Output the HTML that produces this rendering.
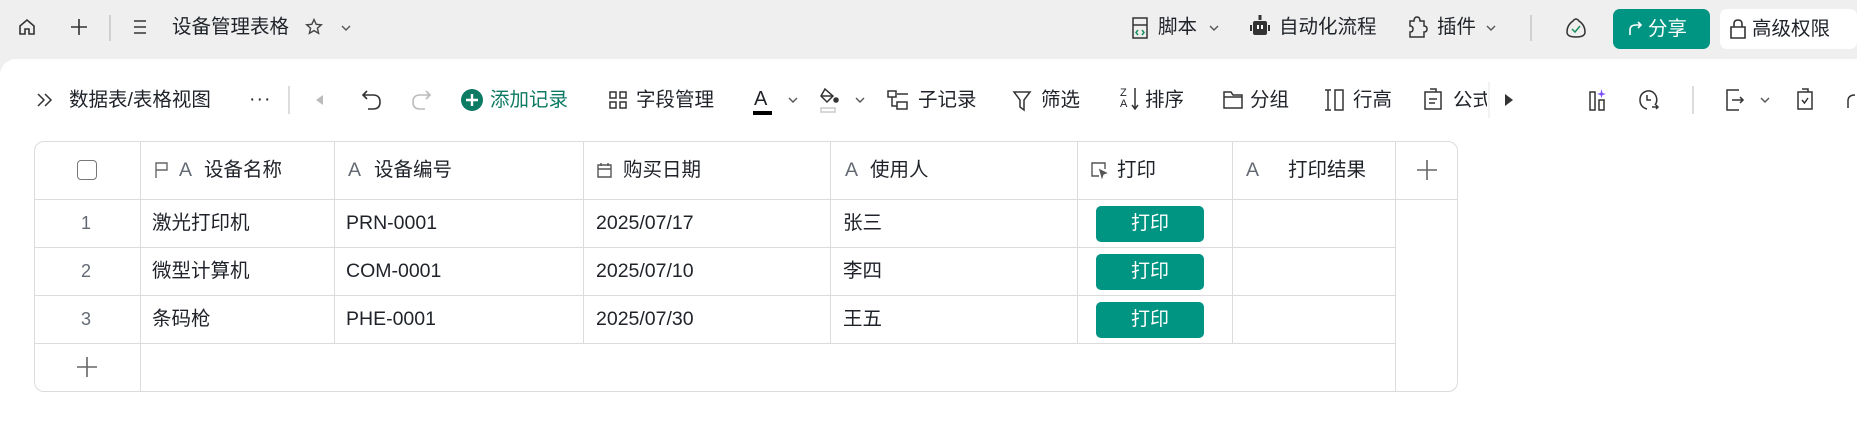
<!DOCTYPE html>
<html><head><meta charset="utf-8"><style>
*{margin:0;padding:0;box-sizing:border-box}
body{width:1857px;height:423px;background:#efefef;font-family:"Liberation Sans","Noto Sans CJK SC",sans-serif;color:#1f2329;position:relative;overflow:hidden;font-size:19.5px}
.a{position:absolute;white-space:nowrap;line-height:1}
.panel{position:absolute;left:0;top:59px;width:1857px;height:364px;background:#fff;border-top-left-radius:16px}
svg{position:absolute;overflow:visible}
.tbl{position:absolute;left:34px;top:141px;width:1424px;height:251px;border:1px solid #dcdcdc;border-radius:10px;background:#fff}
.hl{position:absolute;height:1px;background:#dcdcdc}
.vl{position:absolute;width:1px;background:#dcdcdc}
.btn{position:absolute;left:1096px;width:108px;height:36px;background:#009482;border-radius:5px;color:#fff;font-size:19px;text-align:center;line-height:36px}
.g{color:#646a73}
</style></head><body>
<svg style="left:17px;top:17px" width="20" height="20" viewBox="0 0 20 20" fill="none" stroke="#333" stroke-width="1.6"><path d="M3 9 L10 3 L17 9 V17 H12 V12 H8 V17 H3 Z"/></svg>
<svg style="left:70px;top:18px" width="18" height="18" fill="none" stroke="#333" stroke-width="1.6"><path d="M9 1V17M1 9H17"/></svg>
<div class="a" style="left:109px;top:15px;width:1.5px;height:26px;background:#d0d0d0"></div>
<svg style="left:133px;top:20px" width="14" height="14" fill="none" stroke="#333" stroke-width="1.5"><path d="M1 1H13M1 7H13M1 13H13"/></svg>
<div class="a" style="left:172px;top:18px">设备管理表格</div>
<svg style="left:305px;top:18px" width="18" height="18" fill="none" stroke="#444" stroke-width="1.4"><path d="M9 1.5L11.2 6.3 16.3 6.8 12.4 10.2 13.6 15.3 9 12.6 4.4 15.3 5.6 10.2 1.7 6.8 6.8 6.3Z"/></svg>
<svg style="left:341px;top:25px" width="10" height="6" fill="none" stroke="#555" stroke-width="1.4"><path d="M1 1L5 5 9 1"/></svg>

<svg style="left:1131px;top:17px" width="18" height="22" fill="none" stroke="#333" stroke-width="1.5"><path d="M2 1H16V21H2Z M2 8H16"/><path d="M7 13L5 15.5 7 18M11 13L13 15.5 11 18" stroke="#1a8f5f"/></svg>
<div class="a" style="left:1158px;top:18px">脚本</div>
<svg style="left:1209px;top:25px" width="10" height="6" fill="none" stroke="#555" stroke-width="1.4"><path d="M1 1L5 5 9 1"/></svg>
<svg style="left:1250px;top:15px" width="20" height="24" fill="#333"><rect x="8.5" y="0" width="3" height="5"/><rect x="3" y="6" width="14" height="14" rx="2"/><rect x="0" y="10" width="2" height="6"/><rect x="18" y="10" width="2" height="6"/><rect x="7" y="10" width="2" height="4" fill="#fff"/><rect x="11" y="10" width="2" height="4" fill="#fff"/></svg>
<div class="a" style="left:1279px;top:18px">自动化流程</div>
<svg style="left:1406px;top:16px" width="22" height="22" fill="none" stroke="#333" stroke-width="1.5"><path d="M4 5H8Q8 1 11 1Q14 1 14 5H18V10Q21 10 21 13Q21 16 18 16V21H4V16Q7 16 7 13Q7 10 4 10Z"/></svg>
<div class="a" style="left:1437px;top:18px">插件</div>
<svg style="left:1486px;top:25px" width="10" height="6" fill="none" stroke="#555" stroke-width="1.4"><path d="M1 1L5 5 9 1"/></svg>
<div class="a" style="left:1530px;top:15px;width:1.5px;height:26px;background:#d0d0d0"></div>
<svg style="left:1565px;top:17px" width="22" height="22" fill="none" stroke="#333" stroke-width="1.5"><path d="M8 4Q11 0 14 4Q20 8 20 15Q20 20 11 20Q2 20 2 15Q2 8 8 4Z"/><path d="M7 12L10 15 15 9" stroke="#1a8f5f"/></svg>
<div class="a" style="left:1613px;top:9px;width:97px;height:40px;background:#009482;border-radius:7px;color:#fff;line-height:40px"><svg style="left:14px;top:12px;position:absolute" width="16" height="16" fill="none" stroke="#fff" stroke-width="1.6"><path d="M3 14V9Q3 4 9 4H14M11 1L14 4 11 7"/></svg><span style="position:absolute;left:35px">分享</span></div>
<div class="a" style="left:1720px;top:9px;width:137px;height:40px;background:#fff;border-radius:7px;line-height:40px"><svg style="left:10px;top:10px;position:absolute" width="16" height="20" fill="none" stroke="#333" stroke-width="1.6"><path d="M4 8V5Q4 1 8 1Q12 1 12 5V8M1 8H15V19H1Z"/></svg><span style="position:absolute;left:32px">高级权限</span></div>

<div class="panel"></div>
<svg style="left:37px;top:93px" width="16" height="14" fill="none" stroke="#333" stroke-width="1.5"><path d="M1 1L7 7 1 13M8 1L14 7 8 13"/></svg>
<div class="a" style="left:69px;top:91px">数据表/表格视图</div>
<div class="a" style="left:249px;top:90px;letter-spacing:1px">···</div>
<div class="a" style="left:288px;top:86px;width:1.5px;height:28px;background:#dcdcdc"></div>
<svg style="left:316px;top:95px" width="7" height="10" fill="#bbb"><path d="M7 0V10L0 5Z"/></svg>
<svg style="left:362px;top:89px" width="20" height="22" fill="none" stroke="#333" stroke-width="1.6"><path d="M5 2L1 6 5 10M1 6H11Q18 6 18 13Q18 20 11 20H6"/></svg>
<svg style="left:411px;top:89px" width="20" height="22" fill="none" stroke="#bbb" stroke-width="1.6"><path d="M15 2L19 6 15 10M19 6H9Q2 6 2 13Q2 20 9 20H14"/></svg>
<svg style="left:461px;top:89px" width="22" height="22"><circle cx="11" cy="11" r="11" fill="#0d7a64"/><path d="M11 5V17M5 11H17" stroke="#fff" stroke-width="2.4"/></svg>
<div class="a" style="left:490px;top:91px;color:#0d7a64">添加记录</div>
<svg style="left:609px;top:91px" width="18" height="18" fill="none" stroke="#333" stroke-width="1.5"><rect x="1" y="1" width="6" height="6"/><rect x="11" y="1" width="6" height="6"/><rect x="1" y="11" width="6" height="6"/><rect x="11" y="11" width="6" height="6"/></svg>
<div class="a" style="left:636px;top:91px">字段管理</div>
<div class="a" style="left:754px;top:89px;font-size:20px">A</div>
<div class="a" style="left:753px;top:111px;width:19px;height:4px;background:#000"></div>
<svg style="left:788px;top:97px" width="10" height="6" fill="none" stroke="#555" stroke-width="1.4"><path d="M1 1L5 5 9 1"/></svg>
<svg style="left:818px;top:88px" width="22" height="26" fill="none" stroke="#333" stroke-width="1.5"><path d="M7 1L3 8 9 14 15 8Z"/><path d="M3 8H15" /><circle cx="18" cy="12" r="2" fill="#333"/><rect x="3" y="20" width="14" height="4" stroke="#ccc"/></svg>
<svg style="left:855px;top:97px" width="10" height="6" fill="none" stroke="#555" stroke-width="1.4"><path d="M1 1L5 5 9 1"/></svg>
<svg style="left:887px;top:90px" width="22" height="20" fill="none" stroke="#333" stroke-width="1.5"><path d="M1 1H9V7H1ZM5 7V16H10M10 4H21M10 12H20V19H10Z"/></svg>
<div class="a" style="left:918px;top:91px">子记录</div>
<svg style="left:1013px;top:91px" width="18" height="20" fill="none" stroke="#333" stroke-width="1.5"><path d="M1 1H17L11 9V19L7 16V9Z"/></svg>
<div class="a" style="left:1041px;top:91px">筛选</div>
<div class="a" style="left:1120px;top:88px;font-size:11px;line-height:11px">Z<br>A</div>
<svg style="left:1131px;top:88px" width="8" height="22" fill="none" stroke="#333" stroke-width="1.5"><path d="M4 0V20M1 17L4 21 7 17"/></svg>
<div class="a" style="left:1145px;top:91px">排序</div>
<svg style="left:1223px;top:91px" width="20" height="18" fill="none" stroke="#333" stroke-width="1.5"><path d="M1 1H8L10 4H19V17H1ZM1 6H19"/></svg>
<div class="a" style="left:1250px;top:91px">分组</div>
<svg style="left:1324px;top:89px" width="20" height="22" fill="none" stroke="#333" stroke-width="1.5"><path d="M1 1H7M1 21H7M4 1V21M11 1H19V21H11Z"/></svg>
<div class="a" style="left:1353px;top:91px">行高</div>
<svg style="left:1424px;top:88px" width="18" height="22" fill="none" stroke="#333" stroke-width="1.5"><path d="M1 4H17V21H1ZM6 1H12V4M5 11H13M5 15H11"/></svg>
<div class="a" style="left:1453px;top:91px;width:34px;overflow:hidden">公式</div>
<div class="a" style="left:1488px;top:82px;width:2px;height:36px;background:#f2f2f2"></div>
<svg style="left:1505px;top:94px" width="8" height="12" fill="#333"><path d="M0 0V12L8 6Z"/></svg>
<svg style="left:1589px;top:88px" width="20" height="24" fill="none" stroke="#333" stroke-width="1.5"><rect x="1" y="4" width="5" height="18"/><rect x="10" y="12" width="5" height="10"/><path d="M12.5 1L13.5 5 17 6 13.5 7 12.5 10 11.5 7 8 6 11.5 5Z" fill="#7b4dff" stroke="none"/></svg>
<svg style="left:1638px;top:89px" width="22" height="24" fill="none" stroke="#333" stroke-width="1.5"><path d="M17 16Q20 12 18 7Q15 1 9 2Q2 4 2 11Q2 18 9 20M9 6V11H13M14 18H20M18 16L20 18 18 20"/></svg>
<div class="a" style="left:1692px;top:86px;width:1.5px;height:28px;background:#dcdcdc"></div>
<svg style="left:1725px;top:89px" width="22" height="22" fill="none" stroke="#333" stroke-width="1.5"><path d="M14 1H2V21H14M7 11H18M15 8L18 11 15 14"/></svg>
<svg style="left:1760px;top:97px" width="10" height="6" fill="none" stroke="#555" stroke-width="1.4"><path d="M1 1L5 5 9 1"/></svg>
<svg style="left:1797px;top:88px" width="16" height="22" fill="none" stroke="#333" stroke-width="1.5"><path d="M1 4H15V21H1ZM5 1H11V4M5 12L7.5 15 11 10"/></svg>
<svg style="left:1845px;top:92px" width="14" height="18" fill="none" stroke="#333" stroke-width="1.5"><path d="M3 16V9Q3 3 10 3"/></svg>

<div class="tbl"></div>
<div class="hl" style="left:35px;top:199px;width:1422px"></div>
<div class="hl" style="left:35px;top:247px;width:1360px"></div>
<div class="hl" style="left:35px;top:295px;width:1360px"></div>
<div class="hl" style="left:35px;top:343px;width:1360px"></div>
<div class="vl" style="left:140px;top:142px;height:249px"></div>
<div class="vl" style="left:334px;top:142px;height:201px"></div>
<div class="vl" style="left:583px;top:142px;height:201px"></div>
<div class="vl" style="left:830px;top:142px;height:201px"></div>
<div class="vl" style="left:1077px;top:142px;height:201px"></div>
<div class="vl" style="left:1232px;top:142px;height:201px"></div>
<div class="vl" style="left:1395px;top:142px;height:249px"></div>

<div class="a" style="left:77px;top:160px;width:20px;height:20px;border:1.5px solid #777;border-radius:4px"></div>
<svg style="left:155px;top:162px" width="14" height="16" fill="none" stroke="#666" stroke-width="1.4"><path d="M1 16V1H12V8H1"/></svg>
<div class="a g" style="left:179px;top:161px">A</div>
<div class="a" style="left:204px;top:161px">设备名称</div>
<div class="a g" style="left:348px;top:161px">A</div>
<div class="a" style="left:374px;top:161px">设备编号</div>
<svg style="left:597px;top:162px" width="15" height="16" fill="none" stroke="#555" stroke-width="1.4"><path d="M1 3H14V15H1ZM1 7H14M4 1V4M11 1V4"/></svg>
<div class="a" style="left:623px;top:161px">购买日期</div>
<div class="a g" style="left:845px;top:161px">A</div>
<div class="a" style="left:870px;top:161px">使用人</div>
<svg style="left:1091px;top:162px" width="16" height="16" fill="none" stroke="#555" stroke-width="1.4"><path d="M8 14H1V1H14V7"/><path d="M9 8L15 11 12 12 11 15Z" fill="#555"/></svg>
<div class="a" style="left:1117px;top:161px">打印</div>
<div class="a g" style="left:1246px;top:161px">A</div>
<div class="a" style="left:1288px;top:161px">打印结果</div>
<svg style="left:1417px;top:160px" width="20" height="20" fill="none" stroke="#666" stroke-width="1.6"><path d="M10 0V20M0 10H20"/></svg>

<div class="a g" style="left:81px;top:214px;font-size:18px">1</div>
<div class="a g" style="left:81px;top:262px;font-size:18px">2</div>
<div class="a g" style="left:81px;top:310px;font-size:18px">3</div>
<div class="a" style="left:152px;top:214px">激光打印机</div>
<div class="a" style="left:152px;top:262px">微型计算机</div>
<div class="a" style="left:152px;top:310px">条码枪</div>
<div class="a" style="left:346px;top:214px">PRN-0001</div>
<div class="a" style="left:346px;top:262px">COM-0001</div>
<div class="a" style="left:346px;top:310px">PHE-0001</div>
<div class="a" style="left:596px;top:214px">2025/07/17</div>
<div class="a" style="left:596px;top:262px">2025/07/10</div>
<div class="a" style="left:596px;top:310px">2025/07/30</div>
<div class="a" style="left:843px;top:214px">张三</div>
<div class="a" style="left:843px;top:262px">李四</div>
<div class="a" style="left:843px;top:310px">王五</div>
<div class="btn" style="top:206px">打印</div>
<div class="btn" style="top:254px">打印</div>
<div class="btn" style="top:302px">打印</div>
<svg style="left:77px;top:357px" width="20" height="20" fill="none" stroke="#666" stroke-width="1.6"><path d="M10 0V20M0 10H20"/></svg>
</body></html>
